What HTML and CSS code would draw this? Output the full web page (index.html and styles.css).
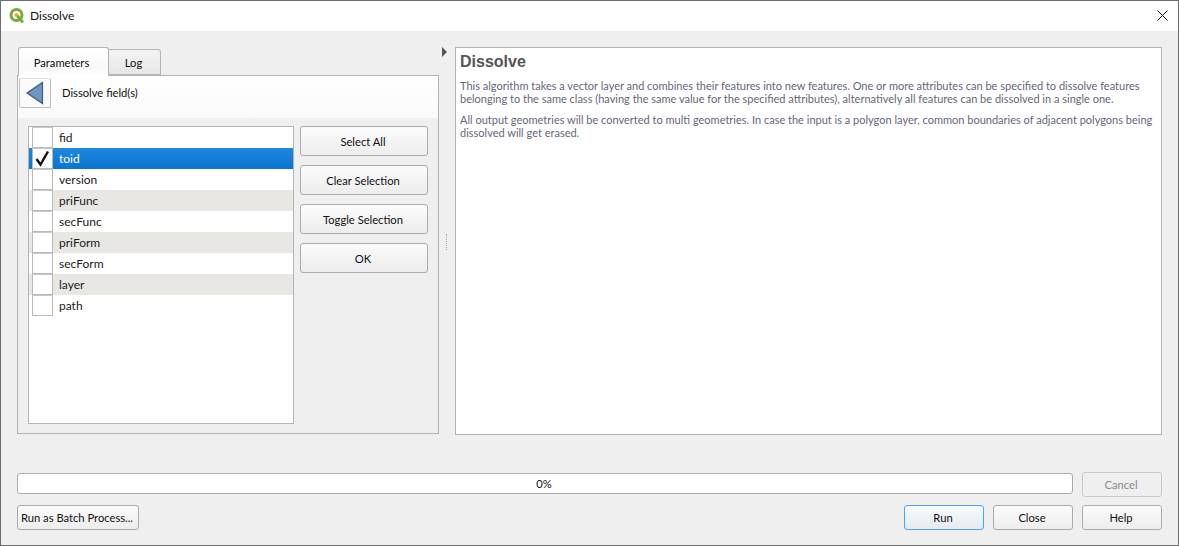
FILE: index.html
```html
<!DOCTYPE html>
<html lang="en">
<head>
    <meta charset="UTF-8">
    <meta name="viewport" content="width=device-width, initial-scale=1.0">
    <title>Dissolve</title>
    <link rel="stylesheet" href="styles.css">
</head>
<body>
    <div class="window">
        <div class="titlebar">
            <svg class="app-icon" width="16" height="16" viewBox="0 0 16 16">
                <circle cx="7.5" cy="7" r="5.5" fill="#fff" stroke="#7fa83a" stroke-width="3"/>
                <circle cx="7.5" cy="7" r="2" fill="#e8a33d"/>
                <path d="M8.5 8L14 14.5" stroke="#7fa83a" stroke-width="2.8"/>
            </svg>
            <span class="title">Dissolve</span>
            <svg class="close-x" width="11" height="11" viewBox="0 0 11 11">
                <path d="M.5.5L10.5 10.5M10.5.5L.5 10.5" stroke="#111" stroke-width="1" fill="none"/>
            </svg>
        </div>

        <div class="content">
            <div class="main">
                <div class="left">
                    <div class="tabs">
                        <div class="tab active">Parameters</div>
                        <div class="tab">Log</div>
                    </div>
                    <div class="pane">
                        <div class="pane-head">
                            <div class="back-btn">
                                <svg width="20" height="24" viewBox="0 0 20 24">
                                    <path d="M17.5 1.5V22.5L2 12Z" fill="#6c96c4" stroke="#48596e" stroke-width="1.2"/>
                                </svg>
                            </div>
                            <span class="pane-title">Dissolve field(s)</span>
                        </div>
                        <div class="pane-body">
                            <ul class="field-list">
                                <li class="field"><span class="check"></span><span class="name">fid</span></li>
                                <li class="field selected">
                                    <span class="check">
                                        <svg width="17" height="17" viewBox="0 0 17 17">
                                            <path d="M2.5 9L6.5 14.5L14 1.5" fill="none" stroke="#111" stroke-width="2.4"/>
                                        </svg>
                                    </span><span class="name">toid</span>
                                </li>
                                <li class="field"><span class="check"></span><span class="name">version</span></li>
                                <li class="field alt"><span class="check"></span><span class="name">priFunc</span></li>
                                <li class="field"><span class="check"></span><span class="name">secFunc</span></li>
                                <li class="field alt"><span class="check"></span><span class="name">priForm</span></li>
                                <li class="field"><span class="check"></span><span class="name">secForm</span></li>
                                <li class="field alt"><span class="check"></span><span class="name">layer</span></li>
                                <li class="field"><span class="check"></span><span class="name">path</span></li>
                            </ul>
                            <div class="side-buttons">
                                <button class="btn tall">Select All</button>
                                <button class="btn tall">Clear Selection</button>
                                <button class="btn tall">Toggle Selection</button>
                                <button class="btn tall">OK</button>
                            </div>
                        </div>
                    </div>
                </div>

                <div class="splitter">
                    <span class="arrow"></span>
                    <span class="grip"></span>
                </div>

                <div class="help">
                    <h2>Dissolve</h2>
                    <p>This algorithm takes a vector layer and combines their features into new features. One or more attributes can be specified to dissolve features belonging to the same class (having the same value for the specified attributes), alternatively all features can be dissolved in a single one.</p>
                    <p>All output geometries will be converted to multi geometries. In case the input is a polygon layer, common boundaries of adjacent polygons being dissolved will get erased.</p>
                </div>
            </div>

            <div class="progress-row">
                <div class="progress">0%</div>
                <button class="btn wide" disabled>Cancel</button>
            </div>

            <div class="button-row">
                <button class="btn batch">Run as Batch Process...</button>
                <div class="spacer"></div>
                <button class="btn wide default">Run</button>
                <button class="btn wide">Close</button>
                <button class="btn wide">Help</button>
            </div>
        </div>
    </div>
</body>
</html>
```

FILE: styles.css
```css
* {
    box-sizing: border-box;
}
html, body {
    margin: 0;
    padding: 0;
    height: 546px;
    overflow: hidden;
}
body {
    font-family: Lato, "Open Sans", sans-serif;
    font-size: 11.2px;
    color: #111;
    background: #fff;
}
.window {
    height: 546px;
    display: flex;
    flex-direction: column;
    background: #efefef;
    border: 1px solid #6e6e6e;
}
.titlebar {
    height: 30px;
    flex: none;
    display: flex;
    align-items: center;
    padding: 0 10px 1px 8px;
    background: #fff;
}
.app-icon {
    margin-right: 5px;
}
.title {
    flex: 1;
    font-size: 12px;
}
.content {
    flex: 1;
    display: flex;
    flex-direction: column;
    padding: 16px 16px 0;
}
.main {
    height: 388px;
    display: flex;
}
.left {
    width: 422px;
    display: flex;
    flex-direction: column;
}
.tabs {
    height: 28px;
    display: flex;
    align-items: flex-end;
    padding-left: 1px;
    position: relative;
    z-index: 1;
}
.tab {
    width: 52px;
    height: 26px;
    padding: 1px 2px 0 0;
    display: flex;
    align-items: center;
    justify-content: center;
    background: linear-gradient(#f4f4f4, #e6e6e6);
    border: 1px solid #b4b4b4;
    border-left: 0;
    border-radius: 0 3px 0 0;
}
.tab.active {
    width: 91px;
    height: 29px;
    margin-bottom: -1px;
    padding: 0 4px 0 0;
    background: linear-gradient(#fff, #f8f8f8 70%, #fff);
    border-left: 1px solid #b4b4b4;
    border-bottom: 0;
    border-radius: 3px 3px 0 0;
}
.pane {
    height: 359px;
    display: flex;
    flex-direction: column;
    background: #efefef;
    border: 1px solid #b4b4b4;
}
.pane-head {
    height: 42px;
    flex: none;
    display: flex;
    align-items: flex-start;
    padding: 2px 0 0 1px;
    background: linear-gradient(#fff, #fafafa);
}
.back-btn {
    width: 32px;
    height: 30px;
    display: flex;
    align-items: center;
    justify-content: center;
    background: #fafafa;
    border: 1px solid #bdbdbd;
    border-top-color: #e2e2e2;
    border-radius: 2px;
}
.pane-title {
    margin: 8px 0 0 11px;
}
.pane-body {
    flex: 1;
    display: flex;
    gap: 6px;
    padding: 8px 10px 9px;
}
.field-list {
    width: 266px;
    margin: 0;
    padding: 0;
    list-style: none;
    background: #fff;
    border: 1px solid #b4b4b4;
}
.field {
    height: 21px;
    display: flex;
    align-items: center;
    padding-left: 3px;
    font-size: 12px;
    color: #1a1a1a;
}
.field.alt {
    background: #e8e7e3;
}
.field.selected {
    background: linear-gradient(#1f88dc, #0a74d6);
    color: #fff;
}
.check {
    width: 21px;
    height: 21px;
    flex: none;
    margin-right: 6px;
    display: flex;
    align-items: center;
    justify-content: center;
    background: #fff;
    border: 1px solid #b9b9b9;
    border-top-color: #c8c8c8;
}
.side-buttons {
    display: flex;
    flex-direction: column;
    gap: 9px;
}
.btn {
    height: 25px;
    padding: 0 2px 0 0;
    font-family: inherit;
    font-size: 11.2px;
    white-space: nowrap;
    color: #111;
    background: linear-gradient(#fbfbfb, #ededed);
    border: 1px solid #ababab;
    border-radius: 3px;
}
.btn.tall {
    width: 128px;
    height: 30px;
}
.btn.wide {
    width: 80px;
}
.btn.batch {
    width: 122px;
}
.btn.default {
    background: linear-gradient(#f7fbfe, #e5ebf0);
    border-color: #4aa5ee;
}
.btn:disabled {
    color: #8a8a8a;
    background: #efefef;
    border-color: #c8c8c8;
}
.splitter {
    width: 16px;
    position: relative;
}
.arrow {
    position: absolute;
    left: 3px;
    top: 0;
    border-left: 5px solid #555;
    border-top: 5px solid transparent;
    border-bottom: 5px solid transparent;
}
.grip {
    position: absolute;
    left: 7px;
    top: 187px;
    height: 16px;
    border-left: 1px dotted #aaa;
}
.help {
    width: 707px;
    padding: 4px 2px 0 4px;
    background: #fff;
    border: 1px solid #b4b4b4;
    color: #666679;
    font-size: 11px;
    line-height: 13px;
}
.help h2 {
    margin: 0 0 7px;
    font-family: "Liberation Sans", sans-serif;
    font-size: 16px;
    line-height: 20px;
    color: #555;
}
.help p {
    margin: 0 0 8px;
}
.progress-row {
    margin-top: 37px;
    display: flex;
    align-items: flex-start;
    gap: 9px;
}
.progress {
    width: 1056px;
    height: 21px;
    margin-top: 1px;
    padding-right: 2px;
    text-align: center;
    line-height: 19px;
    background: #fff;
    border: 1px solid #ababab;
    border-radius: 3px;
}
.button-row {
    margin-top: 8px;
    display: flex;
    gap: 9px;
}
.spacer {
    flex: 1;
}
.close-x {
    display: block;
}
```
